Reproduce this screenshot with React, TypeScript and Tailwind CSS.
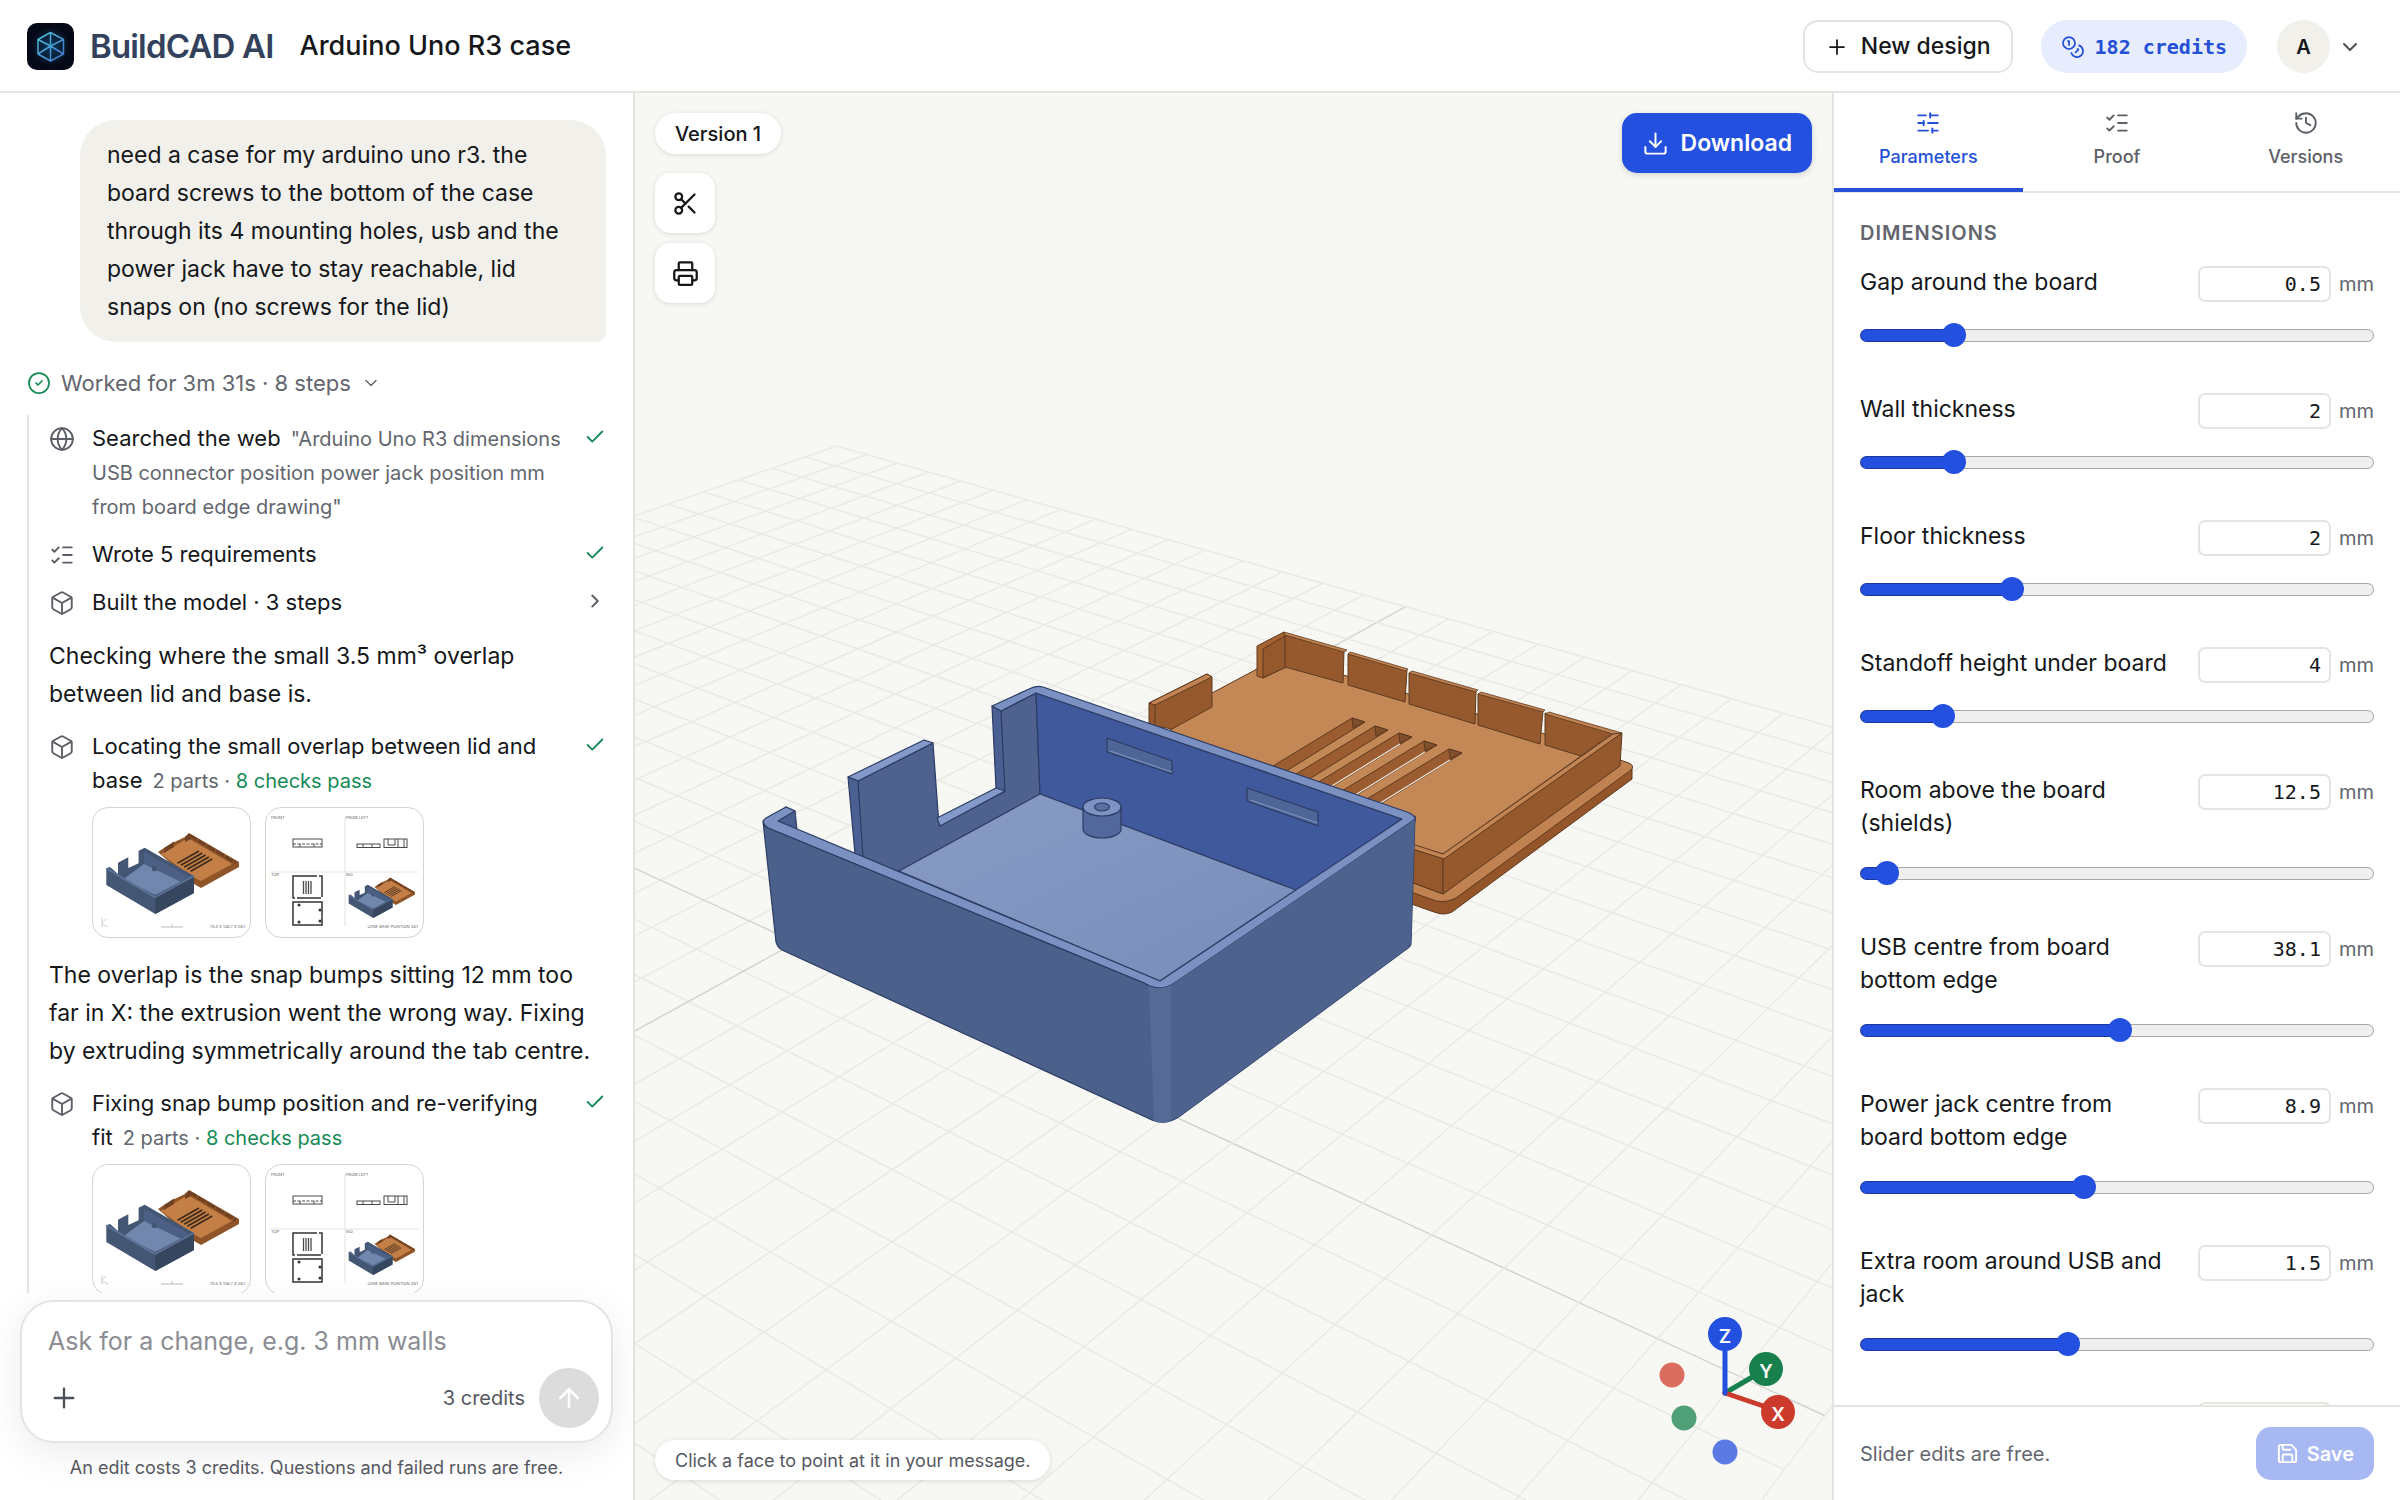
import React, { useState } from 'react';
import {
    ArrowUp,
    Box,
    Check,
    ChevronDown,
    ChevronRight,
    CircleCheck,
    Coins,
    Download,
    Globe,
    History,
    ListChecks,
    Plus,
    Printer,
    Save,
    Scissors,
    SlidersHorizontal,
} from 'lucide-react';

type Point = [number, number];

interface Param {
    id: string;
    label: string;
    value: number;
    min: number;
    max: number;
}

const PARAMS: Param[] = [
    { id: 'gap', label: 'Gap around the board', value: 0.5, min: 0, max: 3 },
    { id: 'wall', label: 'Wall thickness', value: 2, min: 1.2, max: 6 },
    { id: 'floor', label: 'Floor thickness', value: 2, min: 0.8, max: 5 },
    { id: 'standoff', label: 'Standoff height under board', value: 4, min: 2, max: 16 },
    { id: 'room', label: 'Room above the board (shields)', value: 12.5, min: 12, max: 30 },
    { id: 'usb', label: 'USB centre from board bottom edge', value: 38.1, min: 30, max: 46 },
    { id: 'jack', label: 'Power jack centre from board bottom edge', value: 8.9, min: 5, max: 14 },
    { id: 'extra', label: 'Extra room around USB and jack', value: 1.5, min: 0.5, max: 3 },
    { id: 'lid', label: 'Lid thickness', value: 2, min: 1, max: 5 },
];

function Logo() {
    return (
        <svg viewBox="0 0 47 47" className="size-[47px]" aria-hidden="true">
            <defs>
                <linearGradient id="logo-line" x1="0" y1="0" x2="1" y2="1">
                    <stop offset="0" stopColor="#4fc3d9" />
                    <stop offset="1" stopColor="#3f74c9" />
                </linearGradient>
                <radialGradient id="logo-glow">
                    <stop offset="0" stopColor="#0d3a5c" />
                    <stop offset="1" stopColor="#050817" />
                </radialGradient>
            </defs>
            <rect width="47" height="47" rx="10" fill="#050817" />
            <circle cx="23.5" cy="23.5" r="20" fill="url(#logo-glow)" />
            <path
                d="M23.5 9.5 36.5 16.5V31L23.5 38 11 31V16.5ZM23.5 9.5V38M11 16.5 23.5 23 36.5 16.5M11 31 23.5 23 36.5 31"
                fill="none"
                stroke="url(#logo-line)"
                strokeWidth="1.5"
                strokeLinejoin="round"
            />
        </svg>
    );
}

function Header() {
    return (
        <header className="flex h-[93px] shrink-0 items-center border-b-2 border-[#e4e4e0] bg-white pt-[2px] pr-[38px] pl-[27px]">
            <a href="#" className="flex items-center gap-4">
                <Logo />
                <span className="text-[33px] font-semibold tracking-tight text-[#33415c]">BuildCAD AI</span>
            </a>
            <h1 className="ml-[26px] text-[27px] font-medium">Arduino Uno R3 case</h1>
            <div className="ml-auto flex items-center">
                <button className="flex h-[53px] items-center gap-3 rounded-[15px] border-2 border-[#e4e4e0] bg-white px-5 text-[23px] font-medium">
                    <Plus size={24} strokeWidth={1.75} />
                    New design
                </button>
                <button className="ml-7 flex h-[53px] items-center gap-[10px] rounded-full bg-[#e7edfc] px-5 font-['DejaVu_Sans_Mono',monospace] text-[20px] font-bold text-[#2450d8]">
                    <Coins size={24} strokeWidth={1.75} />
                    182 credits
                </button>
                <button className="ml-[30px] flex items-center gap-2" aria-label="Account">
                    <span className="flex size-[53px] items-center justify-center rounded-full bg-[#f1f0ea] text-[20px] font-semibold">
                        A
                    </span>
                    <ChevronDown size={24} className="text-[#4b4f57]" />
                </button>
            </div>
        </header>
    );
}

// small isometric render used in the step previews
function MiniCase() {
    return (
        <g strokeLinejoin="round">
            <path d="M65 44 71 40 81.500 34 92 29 96 25 146 54V59L108 80 101 76Z" fill="#8f5427" />
            <path d="M68 46 95 30 139 56 108 73 98 68Z" fill="#c47f46" />
            <path d="M71 40 81 33.500V39L71 45ZM92 29 96 25.500 98 31 92 34Z" fill="#6f4021" />
            <path d="M96 27 143 55" stroke="#6f4021" strokeWidth="3" strokeDasharray="9 1.500" />
            {[0, 1, 2, 3, 4].map((i) => (
                <path key={i} d="M106 43 84.500 55.300" transform={`translate(${i * 3.3} ${i * 2})`} stroke="#3d2a1c" strokeWidth="1.6" />
            ))}
            <path d="M45.600 42.700 51.700 39.700 101 68V85L62.300 106 13.300 77V60.300L17 59 25 66V54.700L35.300 49.300V60L45.600 55.300Z" fill="#435673" />
            <path d="M51 44 96 69 87.600 73.700 51 56Z" fill="#4c6086" />
            <path d="M51 56 87.600 73.700 62.300 87 30.400 71.300Z" fill="#7187ad" />
            <path d="M13.300 60.300 62.300 89.300 101 68" fill="none" stroke="#5c7196" strokeWidth="2" />
            <path d="M62.300 90V106L101 85V69Z" fill="#36465f" />
            <rect x="59" y="58" width="5" height="5" rx="1" fill="#435673" />
        </g>
    );
}

function IsoThumb() {
    return (
        <svg viewBox="0 0 157 129" className="h-full w-full" role="img" aria-label="Isometric render">
            <MiniCase />
            <path d="M9 110V119M9 116 15 119M9 115 13 111" stroke="#cfcfcb" strokeWidth="1" fill="none" />
            <path d="M68 119H90M79 116V119" stroke="#b9b9b5" strokeWidth="1" />
            <text x="152" y="120" fontSize="4" textAnchor="end" fill="#5c5c5c">75.4 X 138.7 X 28.1</text>
        </svg>
    );
}

function SheetThumb() {
    return (
        <svg viewBox="0 0 157 129" className="h-full w-full" role="img" aria-label="Drawing sheet">
            <path d="M79 8V118M4 64H152" stroke="#e3e3e0" strokeWidth="1" />
            <g fill="none" stroke="#4a4a4a" strokeWidth="1">
                <rect x="27" y="31" width="29" height="8" />
                <path d="M27 36H56M34 39V35M48 39V35" strokeDasharray="3 1.500" />
                <rect x="91" y="36" width="23" height="3.500" />
                <path d="M97 36V39M106 36V39" />
                <rect x="118" y="31" width="23" height="8.500" />
                <path d="M122 31V37H129V31M132 31V39M138 31V39" />
                <path d="M37.500 73V86M40 73V86M42.500 73V86M45 73V86" strokeWidth="1.300" />
            </g>
            <g fill="none" stroke="#333" strokeWidth="1.500">
                <rect x="27" y="68" width="29" height="22" strokeDasharray="24 2" />
                <rect x="27" y="94" width="29" height="23" />
            </g>
            <g fill="#333">
                <circle cx="33" cy="97" r="1.500" />
                <circle cx="33" cy="114" r="1.500" />
                <circle cx="54" cy="102" r="1.500" />
                <circle cx="54" cy="113" r="1.500" />
            </g>
            <g transform="translate(76 57) scale(.5)">
                <MiniCase />
            </g>
            <g fontSize="4" fill="#5c5c5c">
                <text x="5" y="11">FRONT</text>
                <text x="80" y="11">FROM LEFT</text>
                <text x="5" y="68">TOP</text>
                <text x="80" y="68">ISO</text>
                <text x="152" y="120" textAnchor="end">CASE BASE POSITION 28.1</text>
            </g>
        </svg>
    );
}

function Thumbs() {
    return (
        <div className="mt-[9px] mb-px flex gap-[14px]">
            <button className="h-[131px] w-[159px] overflow-hidden rounded-[16px] border border-[#d4d4d0] bg-white">
                <IsoThumb />
            </button>
            <button className="h-[131px] w-[159px] overflow-hidden rounded-[16px] border border-[#d4d4d0] bg-white">
                <SheetThumb />
            </button>
        </div>
    );
}

interface StepProps {
    icon: React.ReactNode;
    title: string;
    open?: boolean;
    children?: React.ReactNode;
    after?: React.ReactNode;
}

function Step({ icon, title, open = true, children, after }: StepProps) {
    return (
        <li className="flex items-start">
            <span className="flex h-[34px] w-[43px] shrink-0 items-center text-[#5b5e66]">{icon}</span>
            <div className="min-w-0 flex-1">
                <p className="text-[20px] leading-[34px] text-[#63666e]">
                    <span className="mr-[10px] text-[22px] leading-none text-[#15171a]">{title}</span>
                    {children}
                </p>
                {after}
            </div>
            <span className="flex h-[30px] w-[38px] shrink-0 items-center justify-end">
                {open ? (
                    <Check size={22} strokeWidth={2} className="text-[#168a56]" />
                ) : (
                    <ChevronRight size={22} className="text-[#5b5e66]" />
                )}
            </span>
        </li>
    );
}

function Note({ children }: { children: React.ReactNode }) {
    return <li className="py-[3px] text-[23px] leading-[38px]">{children}</li>;
}

function ChatPanel() {
    return (
        <section className="flex w-[635px] shrink-0 flex-col border-r-2 border-[#e4e4e0] bg-white">
            <div className="min-h-0 flex-1 overflow-hidden px-[27px] pt-[27px]">
                <p className="ml-[53px] rounded-[36px] rounded-br-[10px] bg-[#f1f0eb] px-[27px] py-4 text-[23px] leading-[38px]">
                    need a case for my arduino uno r3. the board screws to the bottom of the case through its 4 mounting
                    holes, usb and the power jack have to stay reachable, lid snaps on (no screws for the lid)
                </p>
                <button className="mt-6 flex h-[34px] items-center gap-[10px] text-[22px] text-[#63666e]">
                    <CircleCheck size={24} strokeWidth={1.75} className="text-[#168a56]" />
                    Worked for 3m 31s · 8 steps
                    <ChevronDown size={20} strokeWidth={1.75} />
                </button>
                <ul className="mt-[15px] flex flex-col gap-[14px] border-l-2 border-[#e4e4e0] pt-[7px] pl-5">
                    <Step icon={<Globe size={26} strokeWidth={1.75} />} title="Searched the web">
                        "Arduino Uno R3 dimensions USB connector position power jack position mm from board edge drawing"
                    </Step>
                    <Step icon={<ListChecks size={26} strokeWidth={1.75} />} title="Wrote 5 requirements" />
                    <Step icon={<Box size={26} strokeWidth={1.75} />} title="Built the model · 3 steps" open={false} />
                    <Note>Checking where the small 3.5 mm³ overlap between lid and base is.</Note>
                    <Step
                        icon={<Box size={26} strokeWidth={1.75} />}
                        title="Locating the small overlap between lid and base"
                        after={<Thumbs />}
                    >
                        2 parts · <span className="text-[#168a56]">8 checks pass</span>
                    </Step>
                    <Note>
                        The overlap is the snap bumps sitting 12 mm too far in X: the extrusion went the wrong way. Fixing by
                        extruding symmetrically around the tab centre.
                    </Note>
                    <Step
                        icon={<Box size={26} strokeWidth={1.75} />}
                        title="Fixing snap bump position and re-verifying fit"
                        after={<Thumbs />}
                    >
                        2 parts · <span className="text-[#168a56]">8 checks pass</span>
                    </Step>
                </ul>
            </div>
            <div className="px-5 pt-[7px] pb-[17px]">
                <form className="rounded-[34px] border-2 border-[#e4e4e0] bg-white pt-5 pr-3 pb-[13px] pl-[26px] shadow-[0_10px_40px_rgba(0,0,0,0.08)]">
                    <input
                        type="text"
                        aria-label="Message"
                        placeholder="Ask for a change, e.g. 3 mm walls"
                        className="block h-[38px] w-full bg-transparent text-[25px] outline-none placeholder:text-[#8b8d92]"
                    />
                    <div className="mt-2 flex items-center">
                        <button type="button" aria-label="Attach" className="text-[#4b4f57]">
                            <Plus size={32} strokeWidth={1.75} />
                        </button>
                        <span className="mr-[14px] ml-auto text-[20px] text-[#56585f]">3 credits</span>
                        <button
                            type="button"
                            aria-label="Send"
                            className="flex size-[60px] items-center justify-center rounded-full bg-[#dcdcdc] text-white"
                        >
                            <ArrowUp size={30} strokeWidth={2} />
                        </button>
                    </div>
                </form>
                <p className="mt-[10px] text-center text-[18px] leading-[30px] text-[#56585f]">
                    An edit costs 3 credits. Questions and failed runs are free.
                </p>
            </div>
        </section>
    );
}

// ground plane -> screen, camera is fixed
function project(u: number, v: number): Point {
    const w = 1 - 0.016541 * u + 0.02177 * v;
    return [(795.8 + 34.138 * u + 68.72 * v) / w, (942.4 + 6.164 * u - 7.773 * v) / w];
}

const GRID_HALF = 16;

function Grid() {
    const steps = Array.from({ length: GRID_HALF * 2 + 1 }, (_, i) => i - GRID_HALF);
    return (
        <g strokeWidth="1.5">
            {steps.map((n) => {
                const [ax, ay] = project(n, -GRID_HALF);
                const [bx, by] = project(n, GRID_HALF);
                const [cx, cy] = project(-GRID_HALF, n);
                const [dx, dy] = project(GRID_HALF, n);
                const stroke = n === 0 ? '#d3d4d0' : '#e9eae6';
                return (
                    <g key={n} stroke={stroke}>
                        <line x1={ax} y1={ay} x2={bx} y2={by} />
                        <line x1={cx} y1={cy} x2={dx} y2={dy} />
                    </g>
                );
            })}
        </g>
    );
}

function Lid() {
    const segments = [
        '1285,635 1344,651 1343,683 1285,667',
        '1348,654 1407,670 1405,702 1348,685',
        '1409,673 1476,692 1475,724 1409,704',
        '1478,694 1543,711 1540,744 1478,725',
        '1545,713 1613,733 1581,756 1545,745',
    ];
    const tops = [
        '1284,632 1347,650 1344,652 1285,635',
        '1350,652 1408,669 1406,671 1348,654',
        '1412,671 1478,690 1476,692 1409,673',
        '1481,692 1545,710 1543,712 1478,694',
        '1549,712 1622,733 1613,734 1545,714',
    ];
    const vents: Point[] = [
        [1352, 718],
        [1375, 726],
        [1399, 733],
        [1424, 741],
        [1449, 749],
    ];
    return (
        <g stroke="#5e3a20" strokeWidth="1" strokeLinejoin="round">
            {/* flange */}
            <path d="M1400 888 1414 892 1434 900Q1444 903 1456 898L1632 768V779L1452 912Q1444 916 1434 912L1400 900Z" fill="#95552a" />
            <path d="M1400 878 1443 894 1620 760 1629 763Q1635 766 1631 770L1456 898Q1446 903 1436 901L1400 888Z" fill="#bf8250" />
            {/* plate */}
            <path d="M1257 669 1285 658 1600 750 1581 756 1443 854 1400 842 1280 800 1150 740 1172 729 1212 693Z" fill="#c48857" />
            {vents.map(([x, y], i) => (
                <g key={x}>
                    <polygon points={`${x},${y} ${x + 13},${y + 4} ${x - 80},${y + 62} ${x - 97},${y + 59}`} fill="#9a5c30" />
                    <polygon points={`${x},${y} ${x + 13},${y + 4} ${x + 1},${y + 10}`} fill="#7f4f2b" />
                    {i > 1 && (
                        <line x1={x + 1} y1={y + 11} x2={x - 80} y2={y + 61} stroke="#efe9e2" strokeWidth="1.2" />
                    )}
                </g>
            ))}
            <polygon points="1257,646 1284,632 1286,667 1263,678 1257,676" fill="#a5632f" />
            <polygon points="1263,649 1285,636 1286,667 1263,678" fill="#95572c" />
            {segments.map((points) => (
                <polygon key={points} points={points} fill="#96582d" />
            ))}
            {tops.map((points) => (
                <polygon key={points} points={points} fill="#c28452" strokeWidth="0.8" />
            ))}
            {/* side tab */}
            <polygon points="1149,703 1207,674 1212,677 1212,707 1172,729 1149,725" fill="#96582d" />
            <path d="M1149 703 1207 674 1212 677 1155 705Z" fill="#c28452" />
            <path d="M1155 705V728" />
            {/* right and front lip */}
            <polygon points="1400,842 1443,858 1443,894 1400,878" fill="#95572c" />
            <polygon points="1443,858 1622,733 1620,766 1443,894" fill="#96582d" />
            <polygon points="1613,734 1622,733 1444,859 1400,845 1400,840 1443,854" fill="#c28452" />
        </g>
    );
}

function Base() {
    return (
        <g stroke="#2c3c63" strokeWidth="1.2" strokeLinejoin="round">
            {/* inside of the connector wall */}
            <path
                d="M1001 711 1036 693 1040 795 899 872 862 857 858 781 933 743 939 826 1004 792Z"
                fill="#4f628f"
            />
            <polygon points="848,777 924,740 933,743 858,781" fill="#8499c9" />
            <polygon points="848,777 858,781 863,857 855,854" fill="#4a6093" />
            <polygon points="992,706 1001,711 1005,792 996,788" fill="#4a6093" />
            <polygon points="937,818 996,788 1005,791 940,826" fill="#8499c9" />
            <polygon points="1036,693 1402,819 1296,891 1040,794" fill="#40599c" />
            <polygon points="1040,794 1296,890 1160,981 899,871" fill="url(#floor)" />
            {/* snap slots */}
            <polygon points="1107,738 1172,761 1172,774 1107,752" fill="#4d6597" />
            <polygon points="1247,788 1318,812 1318,826 1247,801" fill="#4d6597" />
            <path d="M1110 751 1172 772M1250 800 1318 823" stroke="#8197c2" strokeWidth="1" />
            {/* standoff */}
            <path d="M1083 807V829A19 9 0 0 0 1121 829V807Z" fill="#52689c" />
            <ellipse cx="1102" cy="807" rx="19" ry="9" fill="#7d93c4" />
            <ellipse cx="1102" cy="807" rx="7.5" ry="4" fill="#5a6f9f" />
            {/* rim */}
            <polygon points="786,807 795,811 797,830 778,821" fill="#4a5f90" />
            <path d="M992 706 1029 689Q1036 685 1043 687L1407 812Q1417 816 1415 821L1176 982Q1160 994 1144 983L768 828Q760 822 766 818L786 807 795 811 778 821 1160 981 1402 819 1036 693 1001 711Z" fill="#7b91c2" />
            {/* outside */}
            <path
                d="M763 821Q763 826 768 828L1144 983Q1160 993 1175 983L1411 822Q1416 819 1415 816L1411 943Q1411 946 1408 948L1180 1116Q1166 1126 1152 1120L782 950Q777 947 776 942Z"
                fill="#4b608b"
            />
            <path d="M1168 987 1411 822 1415 817 1411 943 1408 948 1180 1116 1170 1121Z" fill="#4e628e" stroke="none" />
            <path d="M1149 986Q1160 991 1171 985V1121Q1162 1124 1154 1121Z" fill="#566a96" stroke="none" />
        </g>
    );
}

function Gizmo() {
    return (
        <g strokeWidth="5" strokeLinecap="round">
            <circle cx="1672" cy="1375" r="12.5" fill="#db6c60" />
            <circle cx="1684" cy="1418" r="12.5" fill="#4f9f79" />
            <circle cx="1725" cy="1452" r="12.5" fill="#5b7ae4" />
            <line x1="1725" y1="1393" x2="1766" y2="1369" stroke="#17804d" />
            <line x1="1725" y1="1393" x2="1778" y2="1411" stroke="#cb3a2a" />
            <line x1="1725" y1="1393" x2="1725" y2="1334" stroke="#2450e0" />
            <circle cx="1725" cy="1334" r="17" fill="#2450e0" />
            <circle cx="1766" cy="1369" r="17" fill="#17804d" />
            <circle cx="1778" cy="1412" r="17" fill="#cb3a2a" />
            <g fill="#fff" fontSize="19" fontWeight="600" textAnchor="middle">
                <text x="1725" y="1343">Z</text>
                <text x="1766" y="1378">Y</text>
                <text x="1778" y="1421">X</text>
            </g>
        </g>
    );
}

function Viewport() {
    return (
        <main className="relative flex min-w-0 flex-1 flex-col bg-[#f7f8f4]">
            <svg
                viewBox="635 93 1197 1407"
                preserveAspectRatio="xMidYMid slice"
                className="absolute inset-0 h-full w-full"
                role="img"
                aria-label="Case model"
            >
                <defs>
                    <linearGradient id="floor" x1="0" y1="0" x2="1" y2="1">
                        <stop offset="0" stopColor="#879bc5" />
                        <stop offset="1" stopColor="#798dba" />
                    </linearGradient>
                </defs>
                <Grid />
                <Lid />
                <Base />
                <Gizmo />
            </svg>
            <div className="relative flex flex-1 items-start justify-between px-5 py-5">
                <div className="flex flex-col items-start gap-[10px]">
                    <span className="mb-[9px] flex h-[41px] items-center rounded-full bg-white px-5 text-[20px] font-medium shadow-[0_1px_5px_rgba(0,0,0,0.12)]">
                        Version 1
                    </span>
                    <button
                        aria-label="Section view"
                        className="flex size-[60px] items-center justify-center rounded-[15px] bg-white shadow-[0_1px_5px_rgba(0,0,0,0.12)]"
                    >
                        <Scissors size={27} strokeWidth={2} />
                    </button>
                    <button
                        aria-label="Print"
                        className="flex size-[60px] items-center justify-center rounded-[15px] bg-white shadow-[0_1px_5px_rgba(0,0,0,0.12)]"
                    >
                        <Printer size={27} strokeWidth={2} />
                    </button>
                </div>
                <button className="flex h-[60px] items-center gap-3 rounded-[15px] bg-[#2450e0] px-5 text-[23px] font-semibold text-white shadow-[0_2px_6px_rgba(0,0,0,0.15)]">
                    <Download size={27} strokeWidth={1.75} />
                    Download
                </button>
            </div>
            <p className="relative mb-5 ml-5 flex h-10 items-center self-start rounded-full bg-white px-5 text-[18px] text-[#56585f] shadow-[0_1px_5px_rgba(0,0,0,0.12)]">
                Click a face to point at it in your message.
            </p>
        </main>
    );
}

function ParamRow({ param }: { param: Param }) {
    const [value, setValue] = useState(param.value);
    const ratio = (value - param.min) / (param.max - param.min);
    // the fill ends under the middle of the 24px thumb
    const fill = { '--fill': `calc(12px + (100% - 24px) * ${ratio})` } as React.CSSProperties;

    return (
        <div>
            <div className="flex items-start">
                <label htmlFor={param.id} className="flex-1 pr-6 text-[23px] leading-[33px]">
                    {param.label}
                </label>
                <input
                    id={param.id}
                    type="text"
                    inputMode="decimal"
                    value={value}
                    onChange={(e) => setValue(Number(e.target.value) || 0)}
                    className="h-9 w-[133px] rounded-[7px] border-2 border-[#e4e4e0] px-2 text-right font-['DejaVu_Sans_Mono',monospace] text-[20px]"
                />
                <span className="ml-2 text-[20px] leading-9 text-[#63666e]">mm</span>
            </div>
            <input
                type="range"
                aria-label={param.label}
                min={param.min}
                max={param.max}
                step="any"
                value={value}
                onChange={(e) => setValue(Math.round(Number(e.target.value) * 10) / 10)}
                style={fill}
                className="mt-[21px] block h-6 w-full appearance-none bg-transparent [&::-webkit-slider-runnable-track]:h-[13px] [&::-webkit-slider-runnable-track]:rounded-full [&::-webkit-slider-runnable-track]:border [&::-webkit-slider-runnable-track]:border-black/30 [&::-webkit-slider-runnable-track]:bg-[linear-gradient(to_right,#2450e0_var(--fill),#efefef_var(--fill))] [&::-webkit-slider-runnable-track]:bg-origin-border [&::-webkit-slider-thumb]:mt-[-7px] [&::-webkit-slider-thumb]:size-6 [&::-webkit-slider-thumb]:appearance-none [&::-webkit-slider-thumb]:rounded-full [&::-webkit-slider-thumb]:bg-[#2450e0]"
            />
        </div>
    );
}

const TABS = [
    { name: 'Parameters', icon: SlidersHorizontal },
    { name: 'Proof', icon: ListChecks },
    { name: 'Versions', icon: History },
];

function ParamsPanel() {
    const [tab, setTab] = useState('Parameters');

    return (
        <aside className="flex w-[568px] shrink-0 flex-col border-l-2 border-[#e4e4e0] bg-white">
            <nav className="grid h-[100px] shrink-0 grid-cols-3 border-b-2 border-[#e4e4e0]">
                {TABS.map(({ name, icon: Icon }) => (
                    <button
                        key={name}
                        onClick={() => setTab(name)}
                        className={`-mb-px flex flex-col items-center border-b-4 pt-[17px] text-[18px] leading-7 font-medium ${
                            tab === name ? 'border-[#2450d8] text-[#2450d8]' : 'border-transparent text-[#5b5e66]'
                        }`}
                    >
                        <Icon size={26} strokeWidth={1.75} />
                        <span className="mt-[7px]">{name}</span>
                    </button>
                ))}
            </nav>
            <div className="min-h-0 flex-1 overflow-hidden px-[26px] pt-[25px]">
                <h2 className="text-[20px] leading-[30px] font-semibold tracking-wider text-[#63666e]">DIMENSIONS</h2>
                <div className="mt-[18px] flex flex-col gap-[46px]">
                    {PARAMS.map((param) => (
                        <ParamRow key={param.id} param={param} />
                    ))}
                </div>
            </div>
            <footer className="flex h-[95px] shrink-0 items-center justify-between border-t-2 border-[#e4e4e0] px-[26px]">
                <p className="text-[20px] text-[#63666e]">Slider edits are free.</p>
                <button className="flex h-[53px] items-center gap-2 rounded-[15px] bg-[#a8b8f3] px-5 text-[20px] font-semibold text-white">
                    <Save size={23} strokeWidth={2} />
                    Save
                </button>
            </footer>
        </aside>
    );
}

export default function App() {
    return (
        <div className="flex h-screen flex-col overflow-hidden bg-white font-['Inter',sans-serif] text-[#15171a]">
            <Header />
            <div className="flex min-h-0 flex-1">
                <ChatPanel />
                <Viewport />
                <ParamsPanel />
            </div>
        </div>
    );
}
